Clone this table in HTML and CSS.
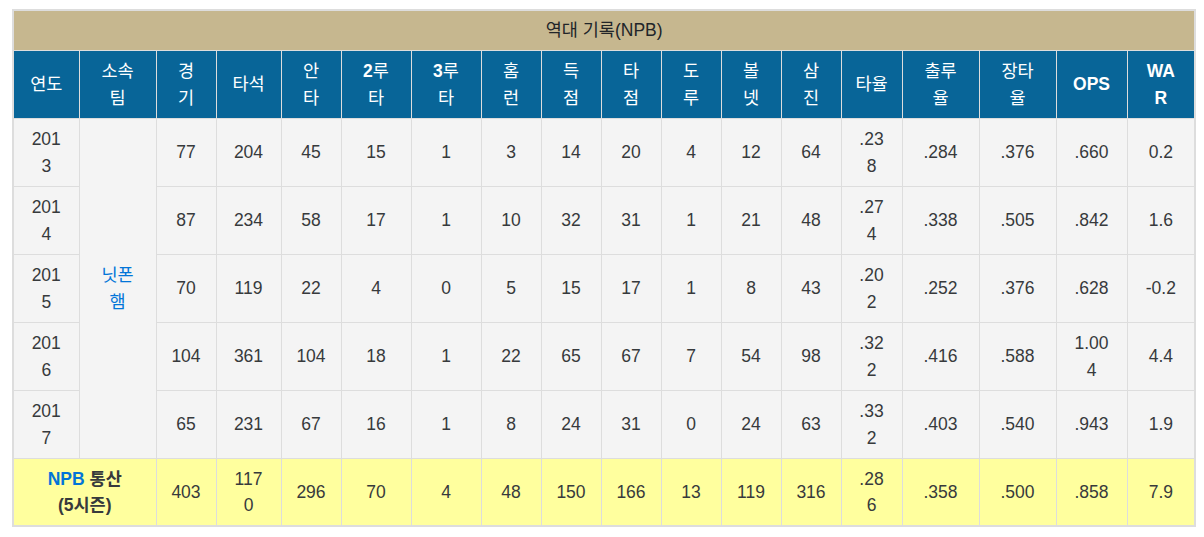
FILE: index.html
```html
<!DOCTYPE html>
<html lang="ko">
<head>
<meta charset="utf-8">
<title>역대 기록(NPB)</title>
<link rel="stylesheet" href="styles.css">
</head>
<body>
<div class="wrap">
<table class="stats">
  <colgroup>
    <col class="c66"><col class="c77"><col class="c60"><col class="c65"><col class="c60">
    <col class="c70"><col class="c70"><col class="c60"><col class="c60"><col class="c60">
    <col class="c60"><col class="c60"><col class="c60"><col class="c61"><col class="c77">
    <col class="c77"><col class="c71"><col class="c68">
  </colgroup>
  <thead>
    <tr class="title-row"><th colspan="18">역대 기록(NPB)</th></tr>
    <tr class="head-row">
      <th>연도</th><th>소속<br>팀</th><th>경<br>기</th><th>타석</th><th>안<br>타</th>
      <th><b>2</b>루<br>타</th><th><b>3</b>루<br>타</th><th>홈<br>런</th><th>득<br>점</th><th>타<br>점</th>
      <th>도<br>루</th><th>볼<br>넷</th><th>삼<br>진</th><th>타율</th><th>출루<br>율</th>
      <th>장타<br>율</th><th><b>OPS</b></th><th><b>WA<br>R</b></th>
    </tr>
  </thead>
  <tbody>
    <tr>
      <td>201<br>3</td><td rowspan="5" class="team"><a href="#">닛폰<br>햄</a></td>
      <td>77</td><td>204</td><td>45</td><td>15</td><td>1</td><td>3</td><td>14</td><td>20</td><td>4</td><td>12</td><td>64</td>
      <td>.23<br>8</td><td>.284</td><td>.376</td><td>.660</td><td>0.2</td>
    </tr>
    <tr>
      <td>201<br>4</td>
      <td>87</td><td>234</td><td>58</td><td>17</td><td>1</td><td>10</td><td>32</td><td>31</td><td>1</td><td>21</td><td>48</td>
      <td>.27<br>4</td><td>.338</td><td>.505</td><td>.842</td><td>1.6</td>
    </tr>
    <tr>
      <td>201<br>5</td>
      <td>70</td><td>119</td><td>22</td><td>4</td><td>0</td><td>5</td><td>15</td><td>17</td><td>1</td><td>8</td><td>43</td>
      <td>.20<br>2</td><td>.252</td><td>.376</td><td>.628</td><td>-0.2</td>
    </tr>
    <tr>
      <td>201<br>6</td>
      <td>104</td><td>361</td><td>104</td><td>18</td><td>1</td><td>22</td><td>65</td><td>67</td><td>7</td><td>54</td><td>98</td>
      <td>.32<br>2</td><td>.416</td><td>.588</td><td>1.00<br>4</td><td>4.4</td>
    </tr>
    <tr>
      <td>201<br>7</td>
      <td>65</td><td>231</td><td>67</td><td>16</td><td>1</td><td>8</td><td>24</td><td>31</td><td>0</td><td>24</td><td>63</td>
      <td>.33<br>2</td><td>.403</td><td>.540</td><td>.943</td><td>1.9</td>
    </tr>
  </tbody>
  <tfoot>
    <tr class="total">
      <td colspan="2" class="total-label"><a href="#">NPB</a> 통산<br>(5시즌)</td>
      <td>403</td><td>117<br>0</td><td>296</td><td>70</td><td>4</td><td>48</td><td>150</td><td>166</td><td>13</td><td>119</td><td>316</td>
      <td>.28<br>6</td><td>.358</td><td>.500</td><td>.858</td><td>7.9</td>
    </tr>
  </tfoot>
</table>
</div>
</body>
</html>
```

FILE: styles.css
```css
html, body {
  margin: 0;
  padding: 0;
  background: #ffffff;
}

.wrap {
  padding: 9px 10px 0 12px;
}

.stats {
  width: 1182px;
  table-layout: fixed;
  border-collapse: collapse;
  border: 2px solid #dddddd;
  font-family: "Liberation Sans", Arial, "Noto Sans CJK KR", sans-serif;
  font-size: 17.5px;
  line-height: 26.5px;
  color: #373a3c;
}

.c60 { width: 60px; }
.c61 { width: 61px; }
.c65 { width: 65px; }
.c66 { width: 66px; }
.c68 { width: 68px; }
.c70 { width: 70px; }
.c71 { width: 71px; }
.c77 { width: 77px; }

.stats th,
.stats td {
  border: 1px solid #dddddd;
  padding: 0;
  text-align: center;
  vertical-align: middle;
}

.title-row th {
  height: 39px;
  background: #c6b78f;
  color: #212529;
  font-weight: normal;
}

.head-row th {
  height: 67px;
  background: #086598;
  color: #ffffff;
  font-weight: normal;
}

.head-row b {
  font-weight: bold;
}

.stats tbody td {
  height: 67px;
  background: #f4f4f4;
}

.stats a {
  color: #0275d8;
  text-decoration: none;
}

.total td {
  height: 66px;
  background: #ffff9e;
}

.total-label {
  font-weight: bold;
}
```
